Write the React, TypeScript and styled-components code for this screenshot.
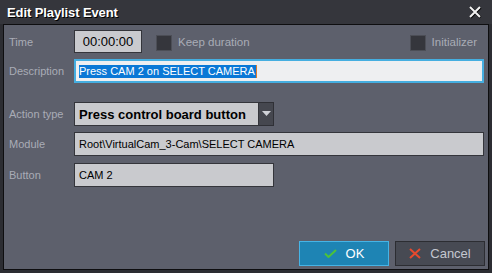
import React from "react";
import styled, { createGlobalStyle } from "styled-components";

const Global = createGlobalStyle`
  html, body { margin: 0; padding: 0; background: #2c2d32; }
  body { font-family: "Liberation Sans", Arial, sans-serif; }
  #root { width: 492px; height: 273px; }
`;

const Window = styled.div`
  width: 492px;
  height: 273px;
  box-sizing: border-box;
  background: #2c2d32;
  display: flex;
  flex-direction: column;
  padding: 0 3px 3px 3px;
`;

const TitleBar = styled.div`
  height: 24px;
  margin: 0 -3px;
  padding: 0 10px 0 7px;
  background: #35363c;
  display: flex;
  align-items: center;
  justify-content: space-between;
`;

const Title = styled.div`
  font-family: "Liberation Sans", Arial, sans-serif;
  font-weight: bold;
  font-size: 13px;
  letter-spacing: -0.1px;
  color: #ffffff;
  text-shadow: 1px 1px 0 #000;
  padding-top: 1px;
`;

const CloseButton = styled.div`
  width: 14px;
  height: 14px;
  display: flex;
  align-items: center;
  justify-content: center;
`;

const Panel = styled.div`
  flex: 1;
  border: 1px solid #0e0e10;
  background: #5d606c;
  display: flex;
  flex-direction: column;
  padding: 5px 2px 2px 5px;
  font-family: "Liberation Sans", Arial, sans-serif;
  font-size: 11px;
`;

const Row = styled.div<{ $top: number; $h: number }>`
  display: flex;
  align-items: center;
  margin-top: ${(p) => p.$top}px;
  height: ${(p) => p.$h}px;
`;

const Label = styled.div`
  width: 65px;
  color: #a9acb6;
  font-size: 11px;
`;

const Field = styled.div<{ $w?: number; $bold?: boolean }>`
  box-sizing: border-box;
  height: 100%;
  width: ${(p) => (p.$w ? `${p.$w}px` : "auto")};
  flex: ${(p) => (p.$w ? "none" : "1")};
  margin-right: ${(p) => (p.$w ? "0" : "2px")};
  background: #c9cace;
  border: 1px solid #34353b;
  color: #000;
  display: flex;
  align-items: center;
  padding-left: 4px;
  font-weight: ${(p) => (p.$bold ? "bold" : "normal")};
  font-size: ${(p) => (p.$bold ? "13px" : "11px")};
  white-space: nowrap;
  overflow: hidden;
`;

const TimeField = styled(Field)`
  justify-content: center;
  padding-left: 0;
  font-size: 13px;
`;

const TextInput = styled.div`
  flex: 1;
  box-sizing: border-box;
  height: 100%;
  margin-right: 2px;
  background: #eeeff1;
  border: 2px solid #45aee0;
  display: flex;
  align-items: center;
  padding-left: 3px;
  font-size: 11px;
`;

const Selected = styled.span`
  background: #0a78d6;
  color: #fff;
  line-height: 13px;
  padding-right: 1px;
  border-right: 1px solid #e07a2a;
`;

const Check = styled.div`
  width: 16px;
  height: 16px;
  box-sizing: border-box;
  background: #35363c;
  border: 1px solid #4c4e56;
  margin-top: 3px;
`;

const CheckLabel = styled.div`
  color: #a9acb6;
  font-size: 11.5px;
  margin-left: 6px;
  margin-top: 1px;
`;

const Spacer = styled.div`
  flex: 1;
`;

const Combo = styled.div`
  display: flex;
  height: 100%;
  width: 200px;
`;

const ComboButton = styled.div`
  width: 15px;
  box-sizing: border-box;
  background: #45474f;
  border: 1px solid #2f3036;
  border-left: none;
  display: flex;
  align-items: center;
  justify-content: center;
`;

const Footer = styled.div`
  margin-top: auto;
  display: flex;
  justify-content: flex-end;
  gap: 6px;
  margin-right: 1px;
  margin-bottom: 1px;
`;

const Btn = styled.div<{ $primary?: boolean }>`
  width: 90px;
  height: 25px;
  box-sizing: border-box;
  background: ${(p) => (p.$primary ? "#1e84b4" : "#474a53")};
  border: 1px solid ${(p) => (p.$primary ? "#46b4e6" : "#2c2d32")};
  color: ${(p) => (p.$primary ? "#ffffff" : "#c4c7d0")};
  display: flex;
  align-items: center;
  justify-content: center;
  gap: 9px;
  font-size: 13px;
`;

export default function App() {
  return (
    <>
      <Global />
      <Window>
        <TitleBar>
          <Title>Edit Playlist Event</Title>
          <CloseButton>
            <svg width="14" height="14" viewBox="0 0 14 14">
              <path d="M2 2 L12 12 M12 2 L2 12" stroke="#000" strokeWidth="2.6" transform="translate(0.5,0.5)" />
              <path d="M2 2 L12 12 M12 2 L2 12" stroke="#f2f2f2" strokeWidth="2" />
            </svg>
          </CloseButton>
        </TitleBar>
        <Panel>
          <Row $top={0} $h={23}>
            <Label>Time</Label>
            <TimeField $w={68}>00:00:00</TimeField>
            <Check style={{ marginLeft: 14 }} />
            <CheckLabel>Keep duration</CheckLabel>
            <Spacer />
            <Check />
            <CheckLabel style={{ marginRight: 9 }}>Initializer</CheckLabel>
          </Row>
          <Row $top={6} $h={24}>
            <Label>Description</Label>
            <TextInput>
              <Selected>Press CAM 2 on SELECT CAMERA</Selected>
            </TextInput>
          </Row>
          <Row $top={19} $h={24}>
            <Label>Action type</Label>
            <Combo>
              <Field $bold style={{ flex: 1, marginRight: 0 }}>Press control board button</Field>
              <ComboButton>
                <svg width="9" height="6" viewBox="0 0 9 6">
                  <path d="M0 0 H9 L4.5 5 Z" fill="#d0d2d8" />
                </svg>
              </ComboButton>
            </Combo>
          </Row>
          <Row $top={6} $h={24}>
            <Label>Module</Label>
            <Field>Root\VirtualCam_3-Cam\SELECT CAMERA</Field>
          </Row>
          <Row $top={7} $h={24}>
            <Label>Button</Label>
            <Field $w={200}>CAM 2</Field>
          </Row>
          <Footer>
            <Btn $primary>
              <svg width="13" height="9" viewBox="0 0 13 9">
                <path d="M1 4.5 L4.5 8 L12 1" stroke="#4cc23a" strokeWidth="2" fill="none" />
              </svg>
              OK
            </Btn>
            <Btn>
              <svg width="12" height="11" viewBox="0 0 12 11">
                <path d="M1 1 L11 10 M11 1 L1 10" stroke="#e84a2e" strokeWidth="2" />
              </svg>
              Cancel
            </Btn>
          </Footer>
        </Panel>
      </Window>
    </>
  );
}
